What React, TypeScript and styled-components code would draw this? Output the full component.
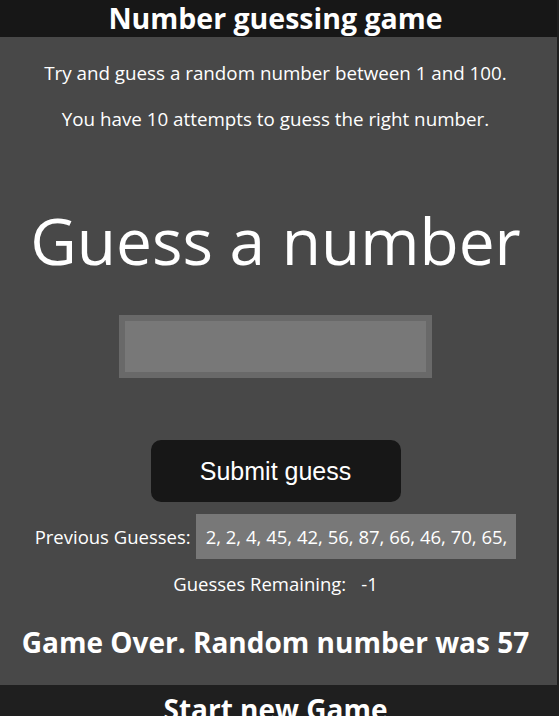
import React from "react";
import styled, { createGlobalStyle } from "styled-components";

const Global = createGlobalStyle`
  html, body { margin: 0; padding: 0; background: #1f1f1f; }
  body { font-family: "Open Sans", "Noto Sans", sans-serif; color: #ffffff; overflow: hidden; }
`;

const Page = styled.div`
  width: 557px;
  display: flex;
  flex-direction: column;
`;

const Header = styled.h1`
  margin: 0;
  height: 37px;
  padding-right: 6px;
  background: #171717;
  font-size: 28.5px;
  font-weight: 700;
  line-height: 37px;
  text-align: center;
`;

const Panel = styled.main`
  background: #484848;
  display: flex;
  flex-direction: column;
  align-items: center;
  padding-right: 6px;
  height: 648px;
`;

const Intro = styled.p<{ $top: number }>`
  margin: ${(p) => p.$top}px 0 0;
  font-size: 18.8px;
  line-height: 22px;
  text-align: center;
`;

const BigTitle = styled.h2`
  margin: 69px 0 0;
  font-size: 64px;
  font-weight: 400;
  line-height: 84px;
`;

const GuessInput = styled.input`
  margin-top: 32px;
  width: 313px;
  height: 63px;
  box-sizing: border-box;
  border: 6px solid #696969;
  background: #787878;
  outline: none;
  color: #fff;
  font-size: 20px;
`;

const SubmitButton = styled.button`
  margin-top: 62px;
  width: 250px;
  height: 62px;
  border: none;
  border-radius: 10px;
  background: #171717;
  color: #fff;
  font-family: "Liberation Sans", Arial, sans-serif;
  font-size: 25px;
`;

const InfoRow = styled.div<{ $top: number; $gap: number }>`
  margin-top: ${(p) => p.$top}px;
  display: flex;
  align-items: center;
  gap: ${(p) => p.$gap}px;
  font-size: 18.5px;
`;

const GuessList = styled.span`
  background: #787878;
  padding: 0 9px 0 10px;
  height: 45px;
  line-height: 45px;
`;

const GameOver = styled.h2`
  margin: 28px 0 0;
  font-size: 28px;
  font-weight: 700;
  line-height: 36px;
`;

const NewGame = styled.h2`
  margin: 0;
  padding-top: 6px;
  padding-right: 6px;
  font-size: 28px;
  font-weight: 700;
  line-height: 36px;
  text-align: center;
`;

export default function App() {
  return (
    <>
      <Global />
      <Page>
        <Header>Number guessing game</Header>
        <Panel>
          <Intro $top={25}>Try and guess a random number between 1 and 100.</Intro>
          <Intro $top={24}>You have 10 attempts to guess the right number.</Intro>
          <BigTitle>Guess a number</BigTitle>
          <GuessInput type="text" aria-label="Guess" />
          <SubmitButton>Submit guess</SubmitButton>
          <InfoRow $top={12} $gap={5}>
            <span>Previous Guesses:</span>
            <GuessList>2, 2, 4, 45, 42, 56, 87, 66, 46, 70, 65,</GuessList>
          </InfoRow>
          <InfoRow $top={12} $gap={15}>
            <span>Guesses Remaining:</span>
            <span>-1</span>
          </InfoRow>
          <GameOver>Game Over. Random number was 57</GameOver>
        </Panel>
        <NewGame>Start new Game</NewGame>
      </Page>
    </>
  );
}
